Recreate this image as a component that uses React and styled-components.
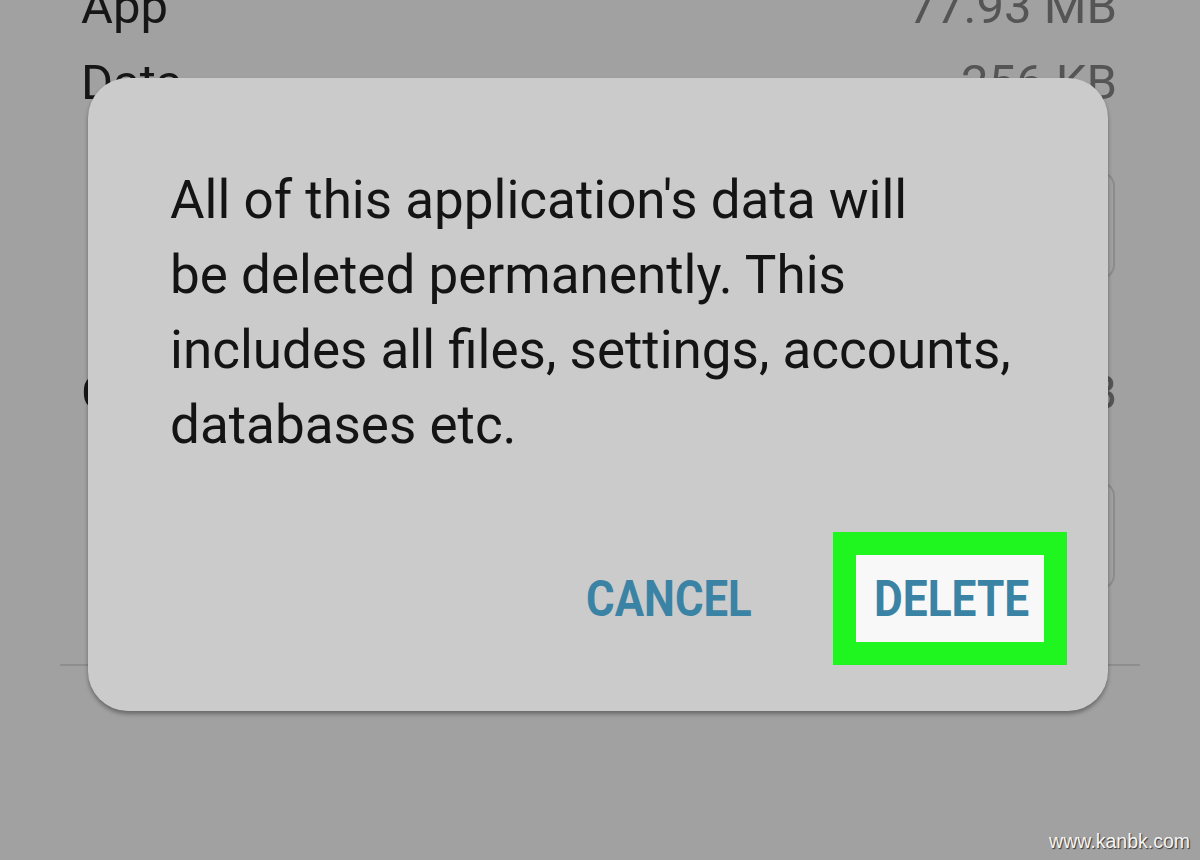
import React from 'react'
import styled, { createGlobalStyle } from 'styled-components'

const GlobalStyle = createGlobalStyle`
    html, body {
        margin: 0;
        padding: 0;
        background: #a1a1a1;
        overflow: hidden;
    }
    body {
        font-family: Roboto, "Liberation Sans", sans-serif;
    }
`

const Screen = styled.div`
    position: relative;
    width: 1200px;
    height: 860px;
    overflow: hidden;
    background: #a1a1a1;
`

const List = styled.div`
    display: flex;
    flex-direction: column;
    margin-top: -31px;
`

const Row = styled.div`
    display: flex;
    justify-content: space-between;
    padding: 0 83px 0 81px;
    font-size: 49px;
    line-height: 76px;
    height: 76px;
    margin-top: ${p => p.$gap || 0}px;
    .label {
        color: #161616;
    }
    .value {
        color: #555;
    }
`

const OutlineButton = styled.div`
    align-self: flex-end;
    width: 420px;
    height: 107px;
    box-sizing: border-box;
    margin: ${p => p.$gap}px 85px 0 0;
    border: 2px solid #8c8c8c;
    border-radius: 14px;
`

const Divider = styled.div`
    height: 2px;
    margin: 75px 60px 0;
    background: #8e8e8e;
`

const Dialog = styled.div`
    position: absolute;
    left: 88px;
    top: 78px;
    width: 1020px;
    height: 633px;
    box-sizing: border-box;
    display: flex;
    flex-direction: column;
    padding: 85px 41px 46px 82px;
    background: #cbcbcb;
    border-radius: 40px;
    box-shadow: 0 3px 4px rgba(0, 0, 0, 0.35);
`

const Message = styled.p`
    margin: 0;
    font-size: 53px;
    line-height: 75px;
    color: #141414;
    white-space: nowrap;
`

const Actions = styled.div`
    margin-top: auto;
    display: flex;
    justify-content: flex-end;
    align-items: center;
    gap: 83px;
`

const ActionText = styled.span`
    display: inline-block;
    font-size: 50px;
    font-weight: 700;
    line-height: 1;
    color: #3b83a5;
    transform: scaleX(${p => p.$squeeze});
    transform-origin: left center;
    width: ${p => p.$width}px;
    white-space: nowrap;
`

const Highlight = styled.div`
    box-sizing: border-box;
    width: 234px;
    height: 133px;
    display: flex;
    align-items: center;
    padding-left: 18px;
    border: 23px solid #1ff51f;
    background: #f8f8f8;
`

const Watermark = styled.div`
    position: absolute;
    right: 10px;
    bottom: 7px;
    font-family: "Liberation Sans", Arial, sans-serif;
    font-size: 19.5px;
    color: #f4f4f4;
    text-shadow: 1px 1px 1px #333;
`

export default function App() {
    return (
        <Screen>
            <GlobalStyle />
            <List>
                <Row>
                    <span className='label'>App</span>
                    <span className='value'>77.93 MB</span>
                </Row>
                <Row>
                    <span className='label'>Data</span>
                    <span className='value'>256 KB</span>
                </Row>
                <OutlineButton $gap={51} />
                <Row $gap={76}>
                    <span className='label'>Cache</span>
                    <span className='value'>0 B</span>
                </Row>
                <OutlineButton $gap={51} />
                <Divider />
            </List>
            <Dialog>
                <Message>
                    All of this application's data will<br />
                    be deleted permanently. This<br />
                    includes all files, settings, accounts,<br />
                    databases etc.
                </Message>
                <Actions>
                    <ActionText $squeeze={0.875} $width={164}>CANCEL</ActionText>
                    <Highlight>
                        <ActionText $squeeze={0.885} $width={154}>DELETE</ActionText>
                    </Highlight>
                </Actions>
            </Dialog>
            <Watermark>www.kanbk.com</Watermark>
        </Screen>
    )
}
